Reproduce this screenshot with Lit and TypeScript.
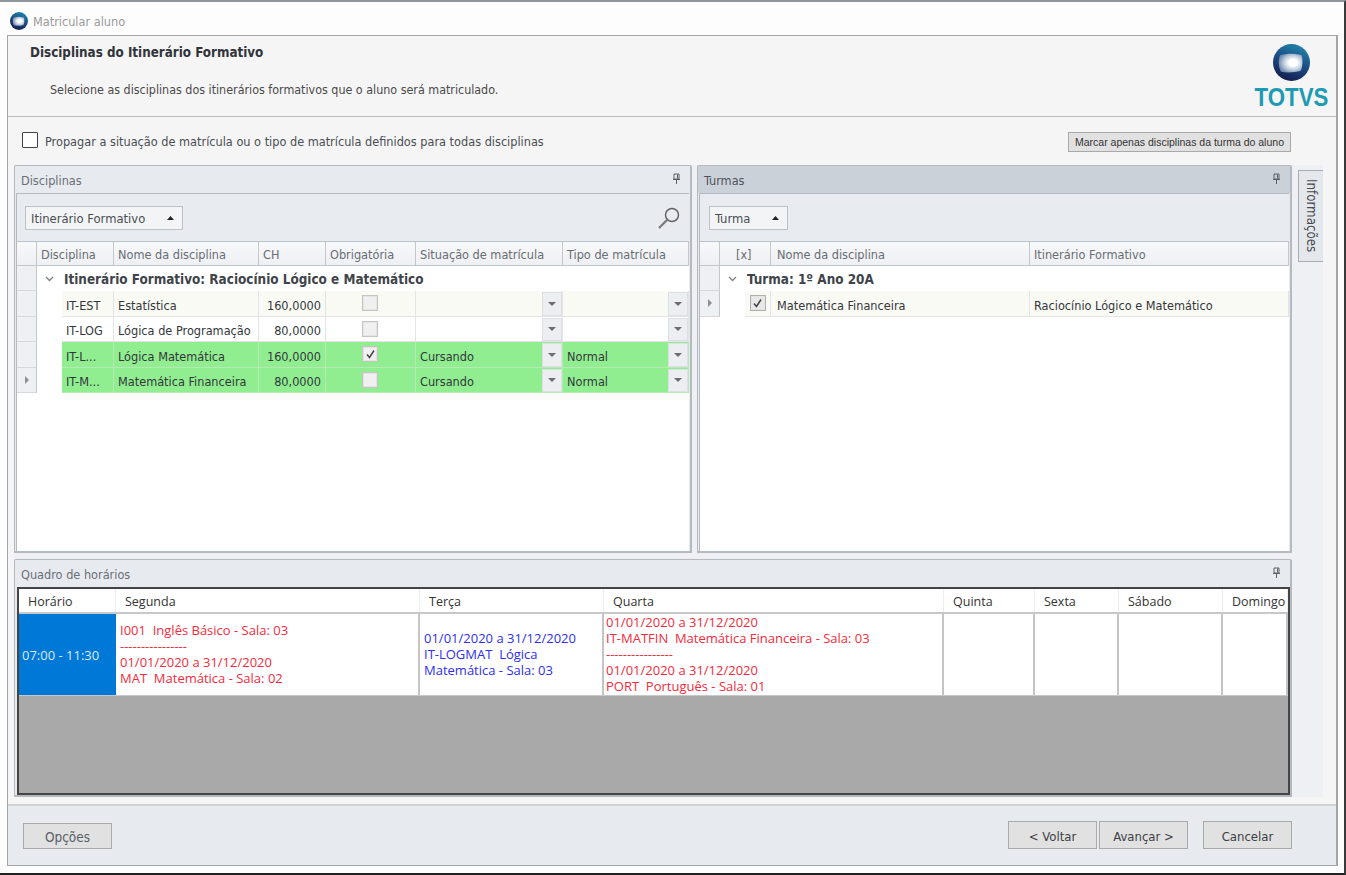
import { LitElement, html, css, svg } from "lit";
import { customElement } from "lit/decorators.js";

const pin = html`<svg class="pin" width="9" height="11" viewBox="0 0 9 11"><path d="M2 1h5v5H2zM1 6.500h7M4.500 7v4M5.500 1.500v4" fill="none" stroke="#5c6066" stroke-width="1"/></svg>`;
const up = html`<svg class="tri" width="7" height="4" viewBox="0 0 7 4"><path d="M3.500 0L7 4H0z" fill="#222"/></svg>`;
const chev = html`<svg class="chev" width="9" height="6" viewBox="0 0 9 6"><path d="M1 1l3.500 3.500L8 1" fill="none" stroke="#7d8288" stroke-width="1.300"/></svg>`;
const ptr = html`<svg width="4" height="8" viewBox="0 0 4 8"><path d="M0 0l4 4-4 4z" fill="#8a8f95"/></svg>`;
const check = (on: boolean, dark = false) => html`<span class="cb ${dark ? "dark" : ""}">${on ? html`<svg width="11" height="11" viewBox="0 0 11 11"><path d="M2 5.500l2.500 3L9 1.500" fill="none" stroke="#444" stroke-width="1.500"/></svg>` : ""}</span>`;
const drop = html`<span class="drop"><svg width="8" height="4" viewBox="0 0 8 4"><path d="M0 0h8L4 4z" fill="#6a6e73"/></svg></span>`;

interface Row { code: string; name: string; ch: string; req: boolean; sit: string; tipo: string; cls: string; cur?: boolean }
const rows: Row[] = [
  { code: "IT-EST", name: "Estatística", ch: "160,0000", req: false, sit: "", tipo: "", cls: "cream" },
  { code: "IT-LOG", name: "Lógica de Programação", ch: "80,0000", req: false, sit: "", tipo: "", cls: "" },
  { code: "IT-L...", name: "Lógica Matemática", ch: "160,0000", req: true, sit: "Cursando", tipo: "Normal", cls: "green" },
  { code: "IT-M...", name: "Matemática Financeira", ch: "80,0000", req: false, sit: "Cursando", tipo: "Normal", cls: "green", cur: true },
];
const days = ["Horário", "Segunda", "Terça", "Quarta", "Quinta", "Sexta", "Sábado", "Domingo"];

@customElement("app-root")
export class AppRoot extends LitElement {
  static styles = css`
    :host { display: block; width: 1346px; height: 875px; font-family: "DejaVu Sans Condensed", "DejaVu Sans", sans-serif; font-size: 12.600px; color: #3c4045; overflow: hidden; }
    * { box-sizing: border-box; }
    .win { height: 875px; border-top: 2px solid #8f969c; border-right: 2px solid #3a3a3a; border-bottom: 2px solid #222; background: #fdfdfd; padding: 0 6px 7px 7px; display: flex; flex-direction: column; }
    .titlebar { height: 33px; display: flex; align-items: center; gap: 5px; padding-left: 3px; color: #9a9a9a; flex: none; padding-top: 5px; }
    .titlebar span { padding-top: 1px; }
    .frame { flex: 1; border: 1px solid #a3a6a9; border-right-width: 2px; background: #f5f5f5; display: flex; flex-direction: column; min-height: 0; }
    .head { height: 81px; flex: none; border-bottom: 1px solid #bcbcbc; position: relative; padding: 9px 0 0 22px; }
    .head b { color: #30343a; display: block; line-height: 16px; font-size: 13.300px; }
    .head p { margin: 21px 0 0 20px; line-height: 16px; color: #4a4a4a; font-size: 12.400px; }
    .logo { position: absolute; right: 7px; top: 8px; display: flex; flex-direction: column; align-items: center; width: 76px; }
    .logo span { font: 700 25px/24px "Liberation Sans", sans-serif; color: #1d9ab4; margin-top: 4px; transform: scaleX(0.89); }
    .opts { height: 48px; flex: none; display: flex; align-items: flex-start; justify-content: space-between; padding: 15px 45px 0 14px; }
    .prop { display: flex; align-items: center; gap: 7px; height: 16px; color: #4a4e53; }
    .prop span:last-child { padding-top: 3px; }
    .box { width: 16px; height: 16px; border: 1px solid #444; background: #fff; border-radius: 1px; }
    .btn { background: #e1e1e1; border: 1px solid #a9a9a9; display: flex; align-items: center; justify-content: center; color: #3c4045; white-space: nowrap; }
    .mark { width: 223px; height: 20px; font: 10.500px "Liberation Sans", sans-serif; color: #333; }
    .dock { flex: 1; min-height: 0; margin: 0 13px 0 6px; background: #eef0f4; display: flex; gap: 6px; }
    .col { width: 1278px; flex: none; display: flex; flex-direction: column; gap: 6px; }
    .top { height: 388px; flex: none; display: flex; gap: 5px; }
    .panel { border: 1px solid #b5bac1; border-bottom-width: 2px; border-right-width: 2px; background: #e7eaef; display: flex; flex-direction: column; min-width: 0; border-radius: 2px 2px 0 0; }
    .p1 { width: 678px; flex: none; }
    .p2 { flex: 1; }
    .ptitle { height: 27px; flex: none; display: flex; align-items: center; justify-content: space-between; padding: 2px 9px 0 6px; color: #6b7077; }
    .p2 .ptitle { background: #cbd1d9; color: #4f555c; }
    .pin { margin-top: -4px; }
    .pbody { flex: 1; min-height: 0; margin: 0 1px 0 1px; border: 1px solid #b5bac1; border-bottom: 0; border-right: 0; display: flex; flex-direction: column; background: #fff; }
    .tools { height: 48px; flex: none; background: #e8ebf0; display: flex; align-items: center; justify-content: space-between; padding: 1px 8px 0 8px; border-bottom: 1px solid #bdc2c8; }
    .p2 .tools { padding-left: 9px; }
    .grp { height: 24px; border: 1px solid #bdc2c8; background: #f3f4f6; display: flex; align-items: center; gap: 22px; padding: 0 8px 0 5px; color: #4a4e53; font-size: 12.900px; }
    .thead, .tr { display: grid; }
    .g1 { grid-template-columns: 20px 77px 145px 67px 90px 147px 1fr; }
    .g2 { grid-template-columns: 20px 51px 259px 1fr; }
    .thead { height: 24px; flex: none; background: linear-gradient(#f7f8fa, #eef0f3); border-bottom: 1px solid #c3c7cc; color: #686d74; }
    .thead > div { display: flex; align-items: center; padding: 1px 0 0 4px; border-right: 1px solid #c3c7cc; white-space: nowrap; overflow: hidden; }
    .thead > div.c { padding: 1px 0 0 16px; }
    .thead > div.n, .tr > div.n { padding-left: 6px; }
    .ind { background: #eef0f3; border-right: 1px solid #c3c7cc; border-bottom: 1px solid #d5d8dc; display: flex; align-items: center; justify-content: center; }
    .group { height: 25px; flex: none; display: flex; border: 0; }
    .g-ind { width: 20px; flex: none; }
    .group b { color: #3f444a; display: flex; align-items: center; white-space: nowrap; font-size: 13.400px; padding-top: 2px; }
    .group .chev { margin: -2px 10px 0 8px; flex: none; }
    .tr { height: 25.500px; flex: none; }
    .tr > div { border-right: 1px solid #e2e4e7; border-bottom: 1px solid #e2e4e7; display: flex; align-items: center; white-space: nowrap; overflow: hidden; position: relative; color: #33373c; padding-top: 4px; }
    .tr > .ind { border-right: 1px solid #c3c7cc; border-bottom: 1px solid #d5d8dc; padding-top: 0; }
    .tr > .disc { padding: 0; border: 0; background: #fff; }
    .disc i { width: 25px; height: 100%; flex: none; }
    .disc > span { flex: 1; height: 100%; padding: 4px 0 0 4px; display: flex; align-items: center; border-right: 1px solid #e2e4e7; border-bottom: 1px solid #e2e4e7; }
    .tr > .tx { padding-left: 4px; }
    .tr > .num { justify-content: flex-end; padding-right: 4px; }
    .tr > .mid { justify-content: center; padding: 0 1px 0 0; }
    .disc > .ck { padding: 0; justify-content: center; }
    .cream > div:not(.ind):not(.disc), .cream .disc > span { background: #fafaf4; }
    .green > div:not(.ind):not(.disc), .green .disc > span { background: #90ee90; border-color: #b5eab5; }
    .cb { width: 16px; height: 16px; flex: none; border: 1px solid #c4c4c4; background: #f0f0f0; box-shadow: inset 0 0 0 1px #e4e4e4; display: flex; align-items: center; justify-content: center; }
    .cb.dark { border-color: #b0b0b0; background: #e8e8e8; }
    .drop { position: absolute; right: 0; top: 1px; bottom: 0; width: 20px; background: #eceef1; border: 1px solid #dcdfe3; display: flex; align-items: center; justify-content: center; }
    .sched { flex: 1; min-height: 0; display: flex; flex-direction: column; }
    .board { flex: 1; min-height: 0; margin: 0 0 0 2px; border: 2px solid #444; background: #a9a9a9; display: flex; flex-direction: column; font: 13px "Open Sans", sans-serif; }
    .sh, .sb { display: grid; grid-template-columns: 97px 304px 184px 340px 91px 84px 104px 1fr; background: #fff; }
    .sh { height: 25px; border-bottom: 2px solid #c8c8c8; color: #333; font-size: 12.500px; }
    .sh div { display: flex; align-items: center; padding: 2px 0 0 9px; border-right: 1px solid #eee; }
    .sb { height: 82px; border-bottom: 1px solid #c8c8c8; }
    .sb > div { border-right: 2px solid #c4c4c4; padding-left: 4px; display: flex; flex-direction: column; justify-content: center; line-height: 16px; white-space: nowrap; }
    .sb > .time { background: #0078d7; color: #dcecf8; padding-left: 3px; border: 0; }
    .red { color: #f52a3c; }
    .blue { color: #2e2ef2; }
    .sb > .blue { padding-bottom: 2px; }
    .sb > .mon { justify-content: flex-start; padding-top: 8px; }
    .sb > .wed { justify-content: flex-start; padding-left: 2px; }
    .side { width: 25px; flex: none; padding-top: 5px; }
    .tab { width: 25px; height: 92px; border: 1px solid #a9adb2; border-right: 0; background: #e4e7eb; writing-mode: vertical-rl; display: flex; align-items: center; justify-content: center; color: #4a4e53; font-size: 13.200px; }
    .foot { height: 61px; flex: none; margin-top: 7px; background: #e7eaef; border-top: 2px solid #d0d2d4; display: flex; align-items: flex-start; padding: 15px 44px 0 15px; }
    .fb { width: 89px; height: 28px; margin-left: 2px; padding-top: 2px; font-size: 13px; }
    .opc { margin: 2px auto 0 0; height: 26px; color: #5a5f66; font-size: 13.500px; }
    .cancel { margin-left: 15px; }
  `;

  render() {
    return html`<div class="win">
      <div class="titlebar">
        <svg width="18" height="18" viewBox="0 0 36 36">${this.mark("a")}</svg>
        <span>Matricular aluno</span>
      </div>
      <div class="frame">
        <div class="head">
          <b>Disciplinas do Itinerário Formativo</b>
          <p>Selecione as disciplinas dos itinerários formativos que o aluno será matriculado.</p>
          <div class="logo">
            <svg width="37" height="37" viewBox="0 0 36 36">${this.mark("b")}</svg>
            <span>TOTVS</span>
          </div>
        </div>
        <div class="opts">
          <div class="prop"><span class="box"></span><span>Propagar a situação de matrícula ou o tipo de matrícula definidos para todas disciplinas</span></div>
          <div class="btn mark">Marcar apenas disciplinas da turma do aluno</div>
        </div>
        <div class="dock">
          <div class="col">
            <div class="top">
              <section class="panel p1">
                <div class="ptitle"><span>Disciplinas</span>${pin}</div>
                <div class="pbody">
                  <div class="tools">
                    <div class="grp">Itinerário Formativo ${up}</div>
                    <svg width="24" height="24" viewBox="0 0 24 24"><circle cx="15" cy="9" r="6.500" fill="none" stroke="#666" stroke-width="1.500"/><path d="M10 14L2 22" stroke="#777" stroke-width="2.200"/></svg>
                  </div>
                  <div class="thead g1">
                    <div></div><div>Disciplina</div><div>Nome da disciplina</div><div>CH</div><div>Obrigatória</div><div>Situação de matrícula</div><div>Tipo de matrícula</div>
                  </div>
                  <div class="group"><div class="ind g-ind"></div><b>${chev}Itinerário Formativo: Raciocínio Lógico e Matemático</b></div>
                  ${rows.map((r) => html`<div class="tr g1 ${r.cls}">
                    <div class="ind">${r.cur ? ptr : ""}</div>
                    <div class="disc"><i></i><span>${r.code}</span></div>
                    <div class="tx">${r.name}</div>
                    <div class="num">${r.ch}</div>
                    <div class="mid">${check(r.req)}</div>
                    <div class="tx">${r.sit}${drop}</div>
                    <div class="tx">${r.tipo}${drop}</div>
                  </div>`)}
                </div>
              </section>
              <section class="panel p2">
                <div class="ptitle"><span>Turmas</span>${pin}</div>
                <div class="pbody">
                  <div class="tools"><div class="grp">Turma ${up}</div></div>
                  <div class="thead g2"><div></div><div class="c">[x]</div><div class="n">Nome da disciplina</div><div>Itinerário Formativo</div></div>
                  <div class="group"><div class="ind g-ind"></div><b>${chev}Turma: 1º Ano 20A</b></div>
                  <div class="tr g2 cream">
                    <div class="ind">${ptr}</div>
                    <div class="disc"><i></i><span class="ck">${check(true, true)}</span></div>
                    <div class="tx n">Matemática Financeira</div>
                    <div class="tx">Raciocínio Lógico e Matemático</div>
                  </div>
                </div>
              </section>
            </div>
            <section class="panel sched">
              <div class="ptitle"><span>Quadro de horários</span>${pin}</div>
              <div class="board">
                <div class="sh">${days.map((d) => html`<div>${d}</div>`)}</div>
                <div class="sb">
                  <div class="time">07:00 - 11:30</div>
                  <div class="red mon"><span>I001&nbsp; Inglês Básico - Sala: 03</span><span>----------------</span><span>01/01/2020 a 31/12/2020</span><span>MAT&nbsp; Matemática - Sala: 02</span></div>
                  <div class="blue"><span>01/01/2020 a 31/12/2020</span><span>IT-LOGMAT&nbsp; Lógica</span><span>Matemática - Sala: 03</span></div>
                  <div class="red wed"><span>01/01/2020 a 31/12/2020</span><span>IT-MATFIN&nbsp; Matemática Financeira - Sala: 03</span><span>----------------</span><span>01/01/2020 a 31/12/2020</span><span>PORT&nbsp; Português - Sala: 01</span></div>
                  <div></div><div></div><div></div><div></div>
                </div>
              </div>
            </section>
          </div>
          <div class="side"><div class="tab">Informações</div></div>
        </div>
        <div class="foot">
          <div class="btn fb opc">Opções</div>
          <div class="btn fb">&lt; Voltar</div>
          <div class="btn fb">Avançar &gt;</div>
          <div class="btn fb cancel">Cancelar</div>
        </div>
      </div>
    </div>`;
  }

  mark(id: string) {
    return svg`<defs>
      <linearGradient id="${id}g" x1="0.7" y1="0" x2="0.3" y2="1"><stop offset="0" stop-color="#1f86ad"/><stop offset="0.45" stop-color="#1d4f86"/><stop offset="1" stop-color="#141a4c"/></linearGradient>
      <radialGradient id="${id}w" cx="0.6" cy="0.48" r="0.6"><stop offset="0.3" stop-color="#ffffff"/><stop offset="0.7" stop-color="#b4c4d6"/><stop offset="1" stop-color="#6f8db0"/></radialGradient>
    </defs>
    <circle cx="18" cy="18" r="18" fill="url(#${id}g)"/>
    <path d="M7 11c6-2 15-2 21 0 1 4 1 11-1 15-6 2-14 2-19 1-3-4-3-12-1-16z" fill="url(#${id}w)"/>`;
  }
}
